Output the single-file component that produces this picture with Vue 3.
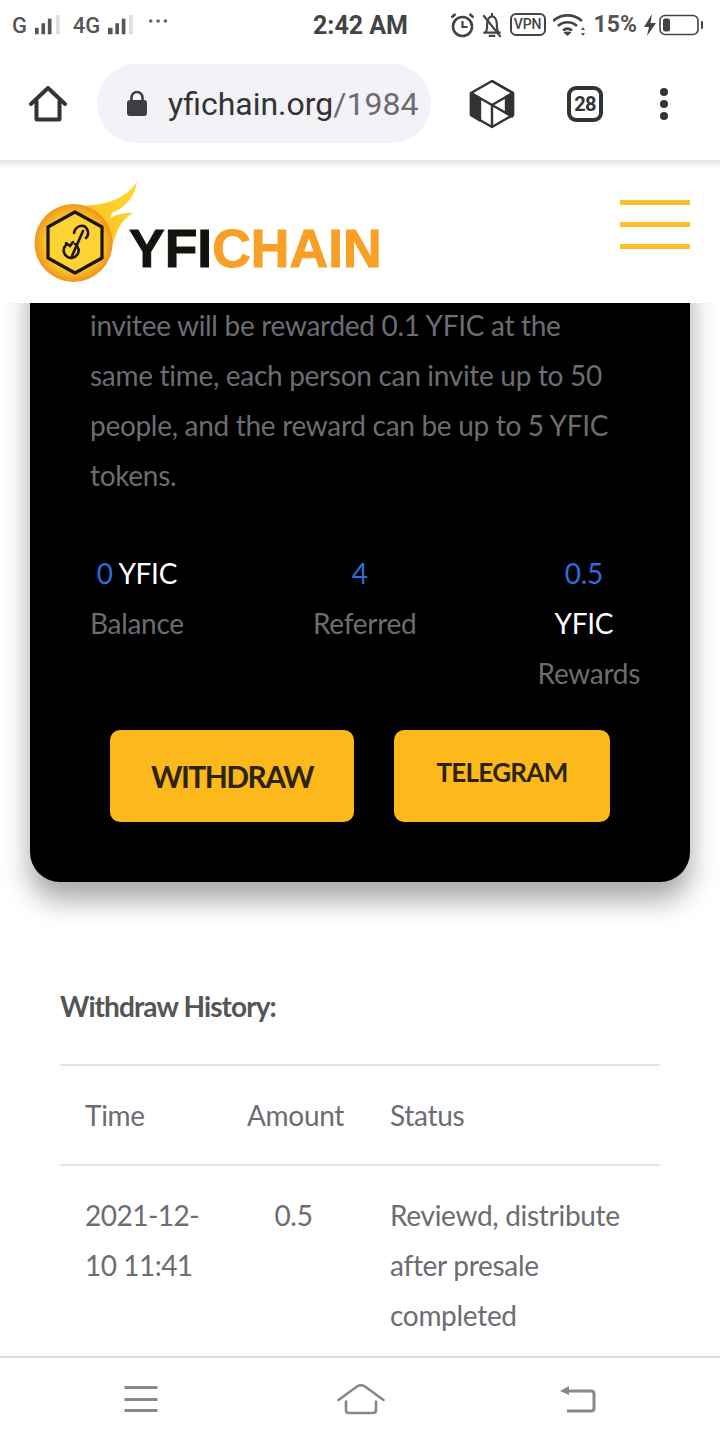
<template>
  <div class="page">
    <!-- Phone status bar -->
    <div class="status">
      <div class="status__left">
        <span class="status__net">G</span>
        <svg class="signal" width="28" height="24" viewBox="0 0 28 24">
          <rect x="0" y="14" width="4" height="7" fill="#555" />
          <rect x="7" y="9" width="4" height="12" fill="#555" />
          <rect x="14" y="4" width="4" height="17" fill="#555" />
          <rect x="23" y="0" width="4" height="21" fill="#ddd" />
        </svg>
        <span class="status__net status__net--second">4G</span>
        <svg class="signal" width="28" height="24" viewBox="0 0 28 24">
          <rect x="0" y="14" width="5" height="7" fill="#555" />
          <rect x="8" y="9" width="4" height="12" fill="#555" />
          <rect x="15" y="4" width="4" height="17" fill="#555" />
          <rect x="23" y="0" width="4" height="21" fill="#ddd" />
        </svg>
        <svg class="status__more" width="22" height="6" viewBox="0 0 22 6">
          <circle cx="3" cy="3" r="2" fill="#666" />
          <circle cx="11" cy="3" r="2" fill="#666" />
          <circle cx="19" cy="3" r="2" fill="#666" />
        </svg>
      </div>
      <span class="status__time">2:42 AM</span>
      <div class="status__right">
        <svg width="25" height="26" viewBox="0 0 25 26" fill="none" stroke="#444">
          <circle cx="12.5" cy="14.5" r="9.5" stroke-width="2.6" />
          <path d="M12.5 9v6h5" stroke-width="2.2" />
          <path d="M1.5 5.5l4-3.5M23.5 5.5l-4-3.5" stroke-width="2.4" />
        </svg>
        <svg class="status__bell" width="20" height="26" viewBox="1 1 18 24" fill="none" stroke="#444" stroke-width="2">
          <path d="M2 20h16M4 20c1.500-2 1.500-4 1.500-7 0-5 2-8 4.500-8s4.500 3 4.500 8c0 3 0 5 1.500 7" />
          <path d="M10 2v3M7 23h6M2 4l16 20" />
        </svg>
        <span class="status__vpn">VPN</span>
        <svg class="status__wifi" width="33" height="24" viewBox="0 0 33 24" fill="none" stroke="#444" stroke-width="2.6">
          <path d="M0 8c8.500-7.500 20.500-7.500 29 0M5 13c5.500-5 13.500-5 19 0M10 17.500c3-2.500 6-2.500 9 0" />
          <path d="M14.500 23l-4-3.500c2.500-1.500 5.500-1.500 8 0z" fill="#444" stroke="none" />
          <path d="M30 14l2 3h-4zM30 23l2-3h-4z" fill="#555" stroke="none" />
        </svg>
        <span class="status__pct">15%</span>
        <svg class="status__bolt" width="12" height="22" viewBox="0 0 12 22">
          <path d="M8 0L0 13h5l-2 9 9-13H6.500z" fill="#444" />
        </svg>
        <svg width="45" height="22" viewBox="0 0 45 22" fill="none">
          <rect x="1" y="1.500" width="38" height="19" rx="5" stroke="#444" stroke-width="1.600" />
          <rect x="4" y="4.500" width="7" height="13" rx="2" fill="#444" />
          <rect x="42" y="7" width="2" height="8" rx="1" fill="#444" />
        </svg>
      </div>
    </div>

    <!-- Browser toolbar -->
    <div class="toolbar">
      <svg class="toolbar__home" width="38" height="38" viewBox="0 0 38 38" fill="none" stroke="#333" stroke-width="4" stroke-linejoin="round" stroke-linecap="round">
        <path d="M2 19L19 3l17 16M7.500 16v18.500h23V16" />
      </svg>
      <div class="url">
        <svg class="url__lock" width="22" height="28" viewBox="0 0 22 28">
          <path d="M5.500 11V7.500a5.500 5.500 0 0 1 11 0V11" fill="none" stroke="#3e3d45" stroke-width="2.600" />
          <rect x="1" y="10" width="20" height="16" rx="3" fill="#3e3d45" />
        </svg>
        <span class="url__text">yfichain.org<span class="url__path">/1984</span></span>
      </div>
      <svg class="toolbar__cube" width="46" height="50" viewBox="0 0 46 50" fill="none" stroke="#333" stroke-width="2.400" stroke-linejoin="round">
        <path d="M23 2l21 12v22L23 48 2 36V14z" />
        <path d="M2 14l21 12 21 12M44 14L23 26v22M23 2l21 12" />
        <path d="M2 14l9 5.200v22.400L2 36z" fill="#333" />
        <path d="M44 14l-7 4v16l7 2z" fill="#333" />
      </svg>
      <div class="tabs">28</div>
      <div class="dots"><i></i><i></i><i></i></div>
    </div>

    <!-- Site header -->
    <header class="site">
      <div class="logo">
        <svg class="logo__mark" width="112" height="110" viewBox="30 178 112 110">
          <defs>
            <linearGradient id="flame" x1="0" y1="1" x2="1" y2="0">
              <stop offset="0" stop-color="#f8b41f" />
              <stop offset="1" stop-color="#ffd92e" />
            </linearGradient>
            <radialGradient id="coin">
              <stop offset="0" stop-color="#fddc45" />
              <stop offset="0.72" stop-color="#f9c42c" />
              <stop offset="1" stop-color="#ee951c" />
            </radialGradient>
          </defs>
          <path d="M62 207C85 205 118 209 137 182C135 195 128 206 112 213L110 218C118 214 126 212 133 213C122 219 116 230 112 248C108 262 90 270 75 262z" fill="url(#flame)" />
          <circle cx="73.500" cy="243" r="39" fill="url(#coin)" />
          <path d="M75 212L102 227V258L75 273L48 258V227z" fill="#fdd235" stroke="#1c1408" stroke-width="3.200" stroke-linejoin="round" />
          <g fill="none" stroke="#1c1408" stroke-width="2.600" stroke-linecap="round">
            <path d="M66 245a7.500 7.500 0 1 0 9-1" />
            <path d="M72 256L83 231" />
            <path d="M74 233C75 226 84 223 87 229C89 233 88 236 86 238" />
            <path d="M66 243l4 3 3-4" />
          </g>
        </svg>
        <span class="logo__text">YFI<span class="logo__accent">CHAIN</span></span>
      </div>
      <div class="burger"><i></i><i></i><i></i></div>
    </header>

    <main class="content">
      <section class="card">
        <p class="card__copy">invitee will be rewarded 0.1 YFIC at the same time, each person can invite up to 50 people, and the reward can be up to 5 YFIC tokens.</p>
        <div class="stats">
          <div class="stat">
            <div><span class="stat__num">0</span> YFIC</div>
            <div class="stat__label">Balance</div>
          </div>
          <div class="stat stat--middle">
            <div class="stat__shift"><span class="stat__num">4</span></div>
            <div class="stat__label">Referred</div>
          </div>
          <div class="stat">
            <div class="stat__shift"><span class="stat__num">0.5</span></div>
            <div class="stat__shift">YFIC</div>
            <div class="stat__label">Rewards</div>
          </div>
        </div>
        <div class="actions">
          <button class="btn btn--withdraw">WITHDRAW</button>
          <button class="btn btn--telegram">TELEGRAM</button>
        </div>
      </section>

      <section class="history">
        <h4 class="history__title">Withdraw History:</h4>
        <table class="table">
          <colgroup>
            <col class="col-time" />
            <col class="col-amount" />
            <col />
          </colgroup>
          <thead>
            <tr>
              <th>Time</th>
              <th class="center">Amount</th>
              <th>Status</th>
            </tr>
          </thead>
          <tbody>
            <tr>
              <td class="date">2021-12-10 11:41</td>
              <td class="center">0.5</td>
              <td>Reviewd, distribute after presale completed</td>
            </tr>
          </tbody>
        </table>
      </section>
    </main>

    <!-- Phone navigation bar -->
    <nav class="navbar">
      <svg width="34" height="28" viewBox="0 0 34 28" fill="#888">
        <rect x="0.500" y="1" width="33" height="3" />
        <rect x="0.500" y="13" width="33" height="3" />
        <rect x="0.500" y="24" width="33" height="3" />
      </svg>
      <svg class="navbar__home" width="48" height="32" viewBox="0 0 48 32" fill="none" stroke="#888" stroke-width="2.600" stroke-linecap="round" stroke-linejoin="round">
        <path d="M1.500 17L20 3.500c2.500-1.500 5.500-1.500 8 0L46.500 17" />
        <path d="M9 18.500V27c0 2 1 3 3 3h24c2 0 3-1 3-3v-8.500" />
      </svg>
      <svg width="36" height="28" viewBox="0 0 36 28" fill="none" stroke="#888" stroke-width="3" stroke-linejoin="round">
        <path d="M5 6h26c2 0 3 1 3 3v14c0 2-1 3-3 3H7" />
        <path d="M0 6l9-5v9z" fill="#888" stroke="none" />
      </svg>
    </nav>
  </div>
</template>

<script setup>
</script>

<style>
html,
body {
  margin: 0;
  background: #fff;
}
</style>

<style scoped>
.page {
  width: 720px;
  height: 1440px;
  display: flex;
  flex-direction: column;
  overflow: hidden;
  background: #fff;
  font-family: Lato, "Noto Sans", sans-serif;
}

/* Status bar */
.status {
  height: 50px;
  flex-shrink: 0;
  display: flex;
  align-items: center;
  padding: 2px 16px 0 12px;
  box-sizing: border-box;
  font-family: Roboto, sans-serif;
  color: #555;
}

.status__left {
  display: flex;
  align-items: center;
  width: 156px;
}

.status__net {
  font-size: 22px;
  font-weight: 500;
  line-height: 26px;
}

.status__net--second {
  margin-left: 12px;
}

.signal {
  margin-left: 8px;
}

.status__more {
  margin: -10px 0 0 14px;
}

.status__time {
  margin: -2px 0 0 145px;
  width: 94px;
  font-size: 25px;
  font-weight: 700;
  color: #444;
  white-space: nowrap;
}

.status__right {
  margin: -3px 0 0 auto;
  display: flex;
  align-items: center;
}

.status__bell {
  margin-left: 7px;
}

.status__vpn {
  margin-left: 8px;
  width: 36px;
  height: 23px;
  box-sizing: border-box;
  border: 2px solid #444;
  border-radius: 6px;
  font-size: 14px;
  font-weight: 500;
  line-height: 19px;
  text-align: center;
  color: #444;
}

.status__wifi {
  margin-left: 7px;
}

.status__pct {
  margin-left: 8px;
  font-size: 23px;
  font-weight: 700;
  color: #555;
}

.status__bolt {
  margin: 0 3px 0 7px;
}

/* Browser toolbar */
.toolbar {
  height: 110px;
  flex-shrink: 0;
  display: flex;
  align-items: center;
  padding: 0 0 3px 29px;
  box-sizing: border-box;
}

.url {
  margin-left: 30px;
  width: 334px;
  height: 79px;
  box-sizing: border-box;
  border-radius: 40px;
  background: #f2f2f7;
  display: flex;
  align-items: center;
  padding-left: 29px;
}

.url__text {
  margin-left: 20px;
  font-family: Roboto, sans-serif;
  font-size: 32px;
  color: #333;
  white-space: nowrap;
}

.url__path {
  color: #6b6b70;
}

.toolbar__cube {
  margin-left: 38px;
}

.tabs {
  margin-left: 52px;
  width: 36px;
  height: 36px;
  box-sizing: border-box;
  border: 4px solid #333;
  border-radius: 9px;
  font-family: Roboto, sans-serif;
  font-size: 20px;
  font-weight: 700;
  letter-spacing: -0.8px;
  line-height: 28px;
  text-align: center;
  color: #333;
}

.dots {
  margin-left: 57px;
  display: flex;
  flex-direction: column;
  gap: 4px;
}

.dots i {
  display: block;
  width: 8px;
  height: 8px;
  border-radius: 50%;
  background: #333;
}

/* Site header */
.site {
  position: relative;
  z-index: 2;
  height: 143px;
  flex-shrink: 0;
  display: flex;
  justify-content: space-between;
  padding: 18px 30px 0 30px;
  box-sizing: border-box;
  background: #fff;
  box-shadow: inset 0 12px 10px -10px rgba(0, 0, 0, 0.18);
}

.logo {
  display: flex;
  height: 110px;
}

.logo__mark {
  flex-shrink: 0;
}

.logo__text {
  margin: 42px 0 0 -13px;
  font-family: "Liberation Sans", sans-serif;
  font-size: 53.5px;
  font-weight: 700;
  line-height: 58px;
  color: #15110c;
  white-space: nowrap;
  -webkit-text-stroke: 1px currentColor;
}

.logo__accent {
  color: #f89f25;
}

.burger {
  margin-top: 22px;
  display: flex;
  flex-direction: column;
  gap: 17px;
}

.burger i {
  display: block;
  width: 70px;
  height: 5px;
  background: #fbbf2b;
}

/* Main */
.content {
  flex: 1;
  min-height: 0;
  overflow: hidden;
}

.card {
  margin: -41px 30px 0;
  padding: 38px 60px 60px;
  background: #000;
  border-radius: 0 0 30px 30px;
  box-shadow: 0 18px 28px rgba(0, 0, 0, 0.35);
  font-size: 28px;
  letter-spacing: -0.3px;
  line-height: 50px;
  color: #fff;
}

.card__copy {
  margin: 0;
  color: #6c6c72;
}

.stats {
  margin: 48px -10px 0 0;
  display: flex;
  justify-content: space-between;
  text-align: center;
}

.stat--middle {
  margin-left: 8px;
}

.stat__num {
  color: #2f6bd9;
}

.stat__shift {
  padding-right: 10px;
}

.stat__label {
  color: #6c6c72;
}

.actions {
  margin: 32px 0 0 20px;
  display: flex;
  gap: 40px;
}

.btn {
  height: 92px;
  border: none;
  border-radius: 10px;
  background: #fdb91b;
  font-family: inherit;
  font-weight: 700;
  color: #2c2310;
  padding: 0;
}

.btn--withdraw {
  width: 244px;
  font-size: 30px;
  letter-spacing: -1.6px;
}

.btn--telegram {
  width: 216px;
  font-size: 26px;
  letter-spacing: -0.7px;
  padding-bottom: 8px;
}

.history {
  margin: 99px 60px 0;
  font-size: 28px;
  letter-spacing: -0.3px;
  line-height: 50px;
  color: #6c6c72;
}

.history__title {
  margin: 0 0 33px;
  font-size: 28px;
  font-weight: 700;
  letter-spacing: -0.9px;
  color: #555;
}

.table {
  width: 100%;
  border-collapse: collapse;
  table-layout: fixed;
  border-top: 2px solid #e4e4e4;
}

.col-time {
  width: 162px;
}

.col-amount {
  width: 143px;
}

.table th,
.table td {
  padding: 24px 25px;
  font-weight: 400;
  text-align: left;
  vertical-align: top;
}

.table th {
  border-bottom: 2px solid #e4e4e4;
}

.table .date {
  padding-right: 10px;
  letter-spacing: -0.5px;
}

.table .center {
  text-align: center;
}

/* Nav bar */
.navbar {
  position: relative;
  z-index: 2;
  height: 84px;
  flex-shrink: 0;
  box-sizing: border-box;
  border-top: 2px solid #dcdcdc;
  background: #fff;
  display: flex;
  align-items: center;
  justify-content: space-between;
  padding: 0 124px;
}

.navbar__home {
  margin-left: 4px;
}
</style>
